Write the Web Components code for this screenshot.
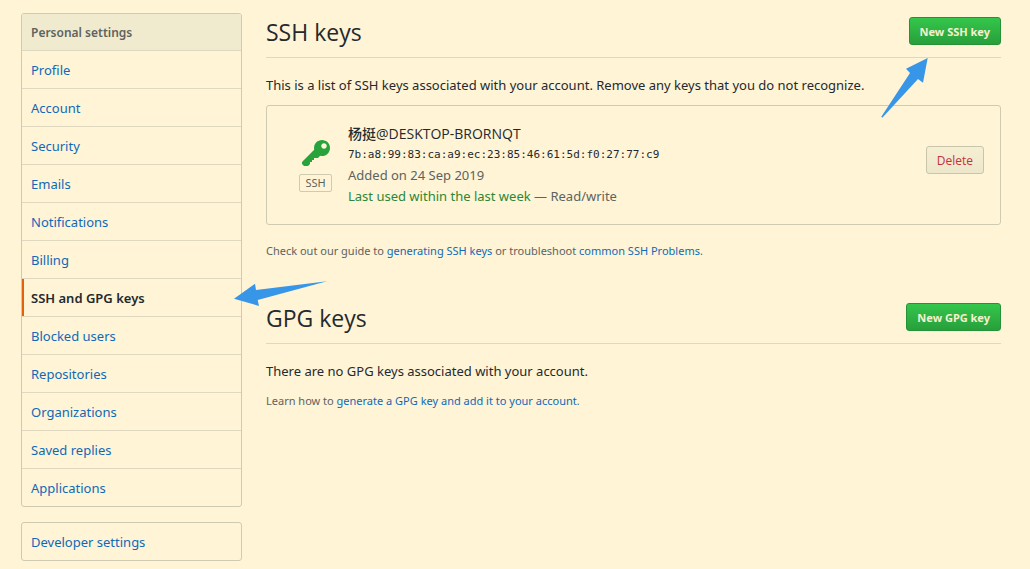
<!DOCTYPE html>
<html lang="en">
<head>
<meta charset="utf-8">
<title>SSH and GPG keys</title>
<style>
  html { background: #fff4d6; }
  body {
    margin: 0;
    font: 13px/21px "Noto Sans", "Open Sans", "Noto Sans CJK SC", sans-serif;
    color: #24292e;
    --line: #cfcab2;
    --soft-line: #dfd8bf;
    --link: #0f69b8;
    --muted: #5e635f;
  }
</style>
</head>
<body>
<settings-page></settings-page>
<script>
const define = (name, html) => {
  const template = document.createElement('template');
  template.innerHTML = html;
  customElements.define(name, class extends HTMLElement {
    constructor() {
      super();
      this.attachShadow({ mode: 'open' }).append(template.content.cloneNode(true));
    }
  });
};

define('side-menu', `
  <style>
    :host { display: block; border: 1px solid var(--line); border-radius: 3px; }
    nav { display: flex; flex-direction: column; }
  </style>
  <nav><slot></slot></nav>`);

define('menu-heading', `
  <style>
    :host { display: block; background: #f0ebcf; border-radius: 2px 2px 0 0; }
    h3 { margin: 0; padding: 9px 9px 7px; font-size: 12px; line-height: 20px; font-weight: 600; color: var(--muted); }
  </style>
  <h3><slot></slot></h3>`);

customElements.define('menu-item', class extends HTMLElement {
  connectedCallback() {
    this.attachShadow({ mode: 'open' }).innerHTML = `
      <style>
        :host { display: block; position: relative; border-top: 1px solid var(--soft-line); }
        :host(:only-child) { border-top: 0; }
        a { display: block; padding: 9px 9px 7px; line-height: 21px; color: var(--link); text-decoration: none; }
        :host([current]) a { color: #24292e; font-weight: 600; }
        :host([current]) a::before { content: ""; position: absolute; inset: 0 auto 0 0; width: 2px; background: #e36209; }
      </style>
      <a href="#"><slot></slot></a><slot name="pointer"></slot>`;
    if (this.hasAttribute('current')) this.shadowRoot.querySelector('a').setAttribute('aria-current', 'page');
  }
});

define('action-button', `
  <style>
    :host { display: block; flex: none; }
    button {
      display: block; box-sizing: border-box; height: 28px; padding: 1px 10px 0;
      border: 1px solid #269238; border-radius: 3px;
      font: 700 11px/25px "Noto Sans", "Open Sans", sans-serif; color: #f4f1d0; white-space: nowrap;
      background: linear-gradient(#34c64b, #289f3b);
    }
    :host([danger]) button {
      color: #c7303a; font-size: 12px; font-weight: 500; border-color: #c9c5ad;
      font-family: "Open Sans", "Noto Sans", sans-serif;
      background: linear-gradient(#f6efd2, #ece7cc);
    }
  </style>
  <button type="button"><slot></slot></button>`);

define('section-heading', `
  <style>
    :host { display: flex; justify-content: space-between; align-items: flex-start; height: 40px; padding-top: 4px; border-bottom: 1px solid var(--soft-line); }
    h2 { margin: 0; font: 400 23px/30px "Open Sans", "Noto Sans", sans-serif; }
  </style>
  <h2><slot></slot></h2><slot name="action"></slot>`);

define('help-note', `
  <style>
    :host { display: block; font-size: 11px; line-height: 18px; color: var(--muted); }
    ::slotted(a) { color: var(--link); text-decoration: none; }
  </style>
  <slot></slot>`);

define('key-card', `
  <style>
    :host { display: flex; align-items: center; padding: 17px 16px; border: 1px solid var(--line); border-radius: 3px; }
    .kind { display: flex; flex-direction: column; align-items: center; gap: 4px; width: 65px; }
    svg { display: block; fill: #28a33c; }
    .label { box-sizing: border-box; height: 18px; padding: 0 5px; border: 1px solid var(--line); border-radius: 2px; font-size: 11px; line-height: 16px; color: var(--muted); }
    .info { flex: 1; display: flex; flex-direction: column; color: var(--muted); }
    strong { font: 500 14px/21px "Open Sans", "Noto Sans", "Noto Sans CJK SC", sans-serif; color: #24292e; }
    code { font: 11px/21px "DejaVu Sans Mono", monospace; color: #24292e; }
    .used { color: #2a8737; }
    action-button { align-self: flex-start; margin-top: 23px; }
  </style>
  <div class="kind">
    <svg width="28" height="32" viewBox="0 0 14 16" aria-hidden="true"><path fill-rule="evenodd" d="M12.83 2.17C12.08 1.42 11.14 1.03 10 1c-1.13.03-2.08.42-2.83 1.17S6.04 3.86 6.01 5c0 .3.03.59.09.89L0 12v1l1 1h2l1-1v-1h1v-1h1v-1h2l1.09-1.11c.3.08.59.11.91.11 1.14-.03 2.08-.42 2.83-1.17S13.97 6.14 14 5c-.03-1.14-.42-2.08-1.17-2.83zM11 5.38c-.77 0-1.38-.61-1.38-1.38 0-.77.61-1.38 1.38-1.38.77 0 1.38.61 1.38 1.38 0 .77-.61 1.38-1.38 1.38z"/></svg>
    <span class="label">SSH</span>
  </div>
  <div class="info">
    <strong><slot name="name"></slot></strong>
    <code><slot name="fingerprint"></slot></code>
    <span><slot name="added"></slot></span>
    <span><span class="used"><slot name="used"></slot></span> — <slot name="access"></slot></span>
  </div>
  <action-button danger>Delete</action-button>`);

define('pointer-up', `
  <style>:host { display: block; position: absolute; top: 45px; right: 73px; pointer-events: none; } svg { display: block; fill: #3896e8; }</style>
  <svg width="47" height="60" viewBox="0 0 47 60" aria-hidden="true"><path d="M46.700 0L25 10.700 29 15 .3 58.700 1.300 59.700 37 21 42 24.700z"/></svg>`);

define('pointer-left', `
  <style>:host { display: block; position: absolute; top: 2px; left: 212px; z-index: 1; pointer-events: none; } svg { display: block; fill: #3896e8; }</style>
  <svg width="94" height="26" viewBox="0 0 94 26" aria-hidden="true"><path d="M0 17.700L21 2.700 22 9 93 .3 23.700 19 25 25z"/></svg>`);

define('settings-page', `
  <style>
    :host { display: flex; align-items: flex-start; gap: 24px; padding: 13px 29px 8px 21px; }
    aside { flex: none; width: 221px; display: flex; flex-direction: column; gap: 15px; }
    main { flex: 1; min-width: 0; position: relative; }
    p { margin: 17px 0 9px; }
    help-note { margin-top: 17px; }
    .gpg { margin-top: 39px; }
    .gpg help-note { margin-top: 10px; }
  </style>
  <aside>
    <side-menu>
      <menu-heading>Personal settings</menu-heading>
      <menu-item>Profile</menu-item>
      <menu-item>Account</menu-item>
      <menu-item>Security</menu-item>
      <menu-item>Emails</menu-item>
      <menu-item>Notifications</menu-item>
      <menu-item>Billing</menu-item>
      <menu-item current>SSH and GPG keys<pointer-left slot="pointer"></pointer-left></menu-item>
      <menu-item>Blocked users</menu-item>
      <menu-item>Repositories</menu-item>
      <menu-item>Organizations</menu-item>
      <menu-item>Saved replies</menu-item>
      <menu-item>Applications</menu-item>
    </side-menu>
    <side-menu><menu-item>Developer settings</menu-item></side-menu>
  </aside>
  <main>
    <section>
      <section-heading>SSH keys<action-button slot="action">New SSH key</action-button></section-heading>
      <p>This is a list of SSH keys associated with your account. Remove any keys that you do not recognize.</p>
      <key-card>
        <span slot="name">杨挺@DESKTOP-BRORNQT</span>
        <span slot="fingerprint">7b:a8:99:83:ca:a9:ec:23:85:46:61:5d:f0:27:77:c9</span>
        <span slot="added">Added on 24 Sep 2019</span>
        <span slot="used">Last used within the last week</span>
        <span slot="access">Read/write</span>
      </key-card>
      <help-note>Check out our guide to <a href="#">generating SSH keys</a> or troubleshoot <a href="#">common SSH Problems</a>.</help-note>
    </section>
    <section class="gpg">
      <section-heading>GPG keys<action-button slot="action">New GPG key</action-button></section-heading>
      <p>There are no GPG keys associated with your account.</p>
      <help-note>Learn how to <a href="#">generate a GPG key and add it to your account</a>.</help-note>
    </section>
    <pointer-up></pointer-up>
  </main>`);
</script>
</body>
</html>
